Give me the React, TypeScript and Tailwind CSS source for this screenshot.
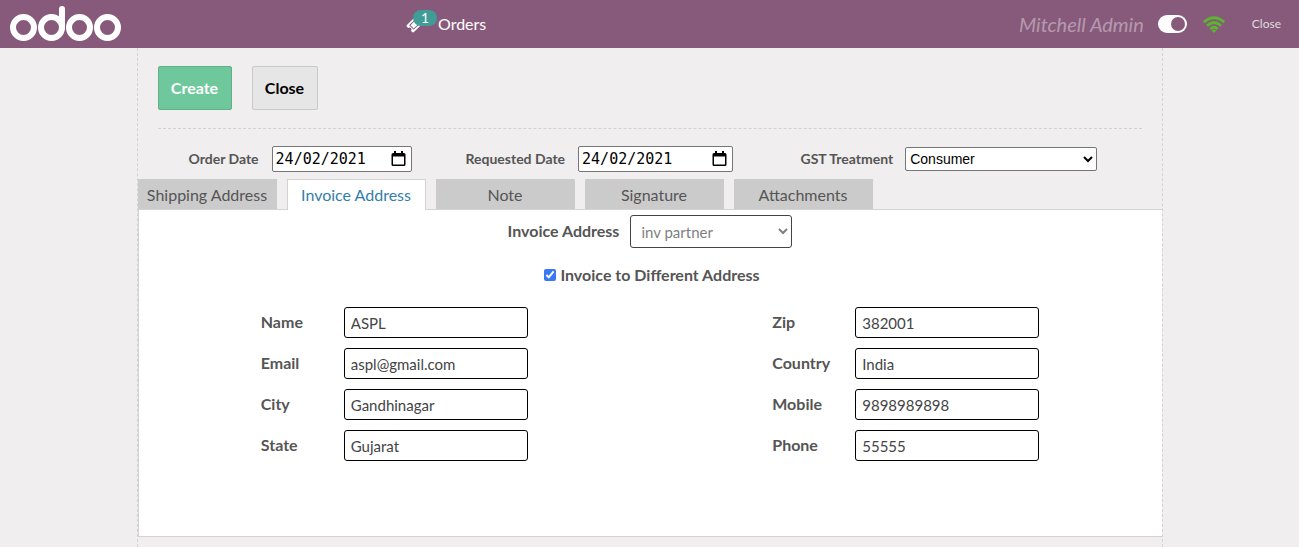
import { useState } from "react";

type FieldDef = { id: string; label: string; value: string };

const leftFields: FieldDef[] = [
  { id: "name", label: "Name", value: "ASPL" },
  { id: "email", label: "Email", value: "aspl@gmail.com" },
  { id: "city", label: "City", value: "Gandhinagar" },
  { id: "state", label: "State", value: "Gujarat" },
];

const rightFields: FieldDef[] = [
  { id: "zip", label: "Zip", value: "382001" },
  { id: "country", label: "Country", value: "India" },
  { id: "mobile", label: "Mobile", value: "9898989898" },
  { id: "phone", label: "Phone", value: "55555" },
];

const tabs = ["Shipping Address", "Invoice Address", "Note", "Signature", "Attachments"];

function Logo() {
  return (
    <svg width="112" height="38" viewBox="0 0 112 38" fill="none" stroke="#fff" strokeWidth="6" role="img" aria-label="odoo">
      <circle cx="13.5" cy="22.500" r="10.5" />
      <circle cx="41.5" cy="22.500" r="10.5" />
      <path d="M52 22.500V4" strokeLinecap="round" />
      <circle cx="69.5" cy="22.500" r="10.5" />
      <circle cx="97.5" cy="22.500" r="10.5" />
    </svg>
  );
}

function TicketIcon() {
  return (
    <svg width="18" height="18" viewBox="0 0 1792 1792" fill="#fff" aria-hidden="true">
      <path d="M1024 452l316 316-572 572-316-316zm-211 979l618-618q19-19 19-45t-19-45l-362-362q-18-18-45-18t-45 18l-618 618q-19 19-19 45t19 45l362 362q18 18 45 18t45-18zm889-637l-907 908q-37 37-90.500 37t-90.500-37l-126-126q56-56 56-136t-56-136-136-56-136 56l-125-126q-37-37-37-90.500t37-90.500l907-906q37-37 90.500-37t90.500 37l125 125q-56 56-56 136t56 136 136 56 136-56l126 125q37 37 37 90.500t-37 90.500z" />
    </svg>
  );
}

function WifiIcon() {
  return (
    <svg width="22" height="17" viewBox="0 0 22 17" fill="none" stroke="#5cb531" strokeWidth="2.800" aria-hidden="true">
      <path d="M.8 6.200Q11-2.800 21.200 6.200" />
      <path d="M4 9.700Q11 3.400 18 9.700" />
      <path d="M7.200 13Q11 9.400 14.800 13" />
      <path d="M11 17L8.500 14.500Q11 12.300 13.500 14.500Z" fill="#5cb531" stroke="none" />
    </svg>
  );
}

function CalendarIcon() {
  return (
    <svg width="15" height="16" viewBox="0 0 15 16" aria-hidden="true">
      <path d="M3 0h2v2h5V0h2v2h1q1.500 0 1.500 1.500v10q0 1.500-1.500 1.500H2q-1.500 0-1.500-1.500v-10Q.5 2 2 2h1zM2 5.500v8h11v-8z" fill="#000" fillRule="evenodd" />
    </svg>
  );
}

function DateField({ id, label, wide }: { id: string; label: string; wide?: boolean }) {
  return (
    <div className="flex items-center gap-[13px]">
      <label htmlFor={id} className="text-sm font-bold">{label}</label>
      <div className={`flex h-[26px] items-center rounded-xs border border-[#767676] bg-white pr-[5px] pl-[3px] ${wide ? "w-[155px]" : "w-[140px]"}`}>
        <input
          id={id}
          type="text"
          defaultValue="24/02/2021"
          className="min-w-0 flex-1 bg-transparent font-['DejaVu_Sans_Mono',monospace] text-[15px] leading-5 text-black outline-none"
        />
        <button type="button" aria-label={`Pick ${label}`}>
          <CalendarIcon />
        </button>
      </div>
    </div>
  );
}

function FieldColumn({ fields }: { fields: FieldDef[] }) {
  return (
    <div className="mx-auto flex flex-col gap-[10px]">
      {fields.map((f) => (
        <div key={f.id} className="flex items-center">
          <label htmlFor={f.id} className="w-[83px] pb-px font-bold">{f.label}</label>
          <input
            id={f.id}
            type="text"
            defaultValue={f.value}
            className="h-[31px] w-[184px] rounded-[3px] border border-black bg-white px-[6px] text-[15px] text-[#444]"
          />
        </div>
      ))}
    </div>
  );
}

export default function App() {
  const [active, setActive] = useState("Invoice Address");
  const [online, setOnline] = useState(true);

  return (
    <div className="flex min-h-screen flex-col bg-[#f0eeee] font-['Lato',sans-serif] text-base text-[#555]">
      <header className="flex h-12 items-center bg-[#875a7b] text-white">
        <div className="w-[406px] pl-[10px]">
          <Logo />
        </div>
        <a href="#orders" className="relative flex items-center gap-[14px]">
          <TicketIcon />
          <span className="absolute top-[-2px] left-[7px] flex h-4 w-6 items-center justify-center rounded-full bg-[#3f9c96] text-sm">1</span>
          <span>Orders</span>
        </a>
        <div className="ml-auto flex items-center pr-[18px]">
          <span className="text-xl text-white/40 italic">Mitchell Admin</span>
          <button
            type="button"
            role="switch"
            aria-checked={online}
            aria-label="Toggle keyboard"
            onClick={() => setOnline(!online)}
            className={`ml-[14px] flex h-[18px] w-[29px] items-center rounded-full bg-white p-[2px] ${online ? "justify-end" : "justify-start"}`}
          >
            <span className="h-[14px] w-[14px] rounded-full bg-[#875a7b]" />
          </button>
          <span className="ml-4">
            <WifiIcon />
          </span>
          <button type="button" className="ml-[27px] text-xs text-[#ddd]">Close</button>
        </div>
      </header>

      <main className="mx-auto flex w-full max-w-[1026px] flex-1 flex-col border-x border-dashed border-[#d3d3d3]">
        <div className="mx-5 flex gap-5 border-b border-dashed border-[#d3d3d3] py-[18px]">
          <button type="button" className="h-11 w-[74px] rounded-xs border border-[#64af8a] bg-[#6ec89b] font-bold text-white">Create</button>
          <button type="button" className="h-11 w-[66px] rounded-xs border border-[#cacaca] bg-[#e6e6e6] font-bold text-black">Close</button>
        </div>

        <div className="flex items-center pt-[17px] pb-[7px] pl-[51px]">
          <div className="w-[277px]">
            <DateField id="order-date" label="Order Date" />
          </div>
          <div className="w-[335px]">
            <DateField id="requested-date" label="Requested Date" wide />
          </div>
          <div className="flex items-center gap-3">
            <label htmlFor="gst" className="text-sm font-bold">GST Treatment</label>
            <select id="gst" className="h-6 w-48 rounded-xs border border-[#767676] bg-white font-['Liberation_Sans',sans-serif] text-sm text-black">
              <option>Consumer</option>
              <option>Regular</option>
            </select>
          </div>
        </div>

        <div role="tablist" className="flex gap-[10px]">
          {tabs.map((t) => (
            <button
              key={t}
              type="button"
              role="tab"
              aria-selected={t === active}
              onClick={() => setActive(t)}
              className={
                t === active
                  ? "relative -mb-px h-[31px] w-[139px] border border-b-0 border-[#d3d3d3] bg-white pb-px whitespace-nowrap text-[#337ea9]"
                  : "h-[30px] w-[139px] bg-[#cbcbcb] pt-[2px] whitespace-nowrap"
              }
            >
              {t}
            </button>
          ))}
        </div>

        <section className="mb-[10px] flex-1 border border-r-0 border-[#d3d3d3] bg-white pt-[5px]">
          <div className="flex items-center justify-center gap-[11px]">
            <label htmlFor="invoice-address" className="pb-[2px] font-bold">Invoice Address</label>
            <select id="invoice-address" className="h-[33px] w-[162px] rounded-[3px] border border-[#444] bg-white pl-[6px] text-[15px] text-[#808080]">
              <option>inv partner</option>
            </select>
          </div>
          <div className="mt-[15px] flex items-center justify-center gap-1 pl-1">
            <input id="different" type="checkbox" defaultChecked className="h-3 w-3 accent-[#3b78f5]" />
            <label htmlFor="different" className="font-bold">Invoice to Different Address</label>
          </div>
          <div className="mt-5 grid grid-cols-2">
            <FieldColumn fields={leftFields} />
            <FieldColumn fields={rightFields} />
          </div>
        </section>
      </main>
    </div>
  );
}
